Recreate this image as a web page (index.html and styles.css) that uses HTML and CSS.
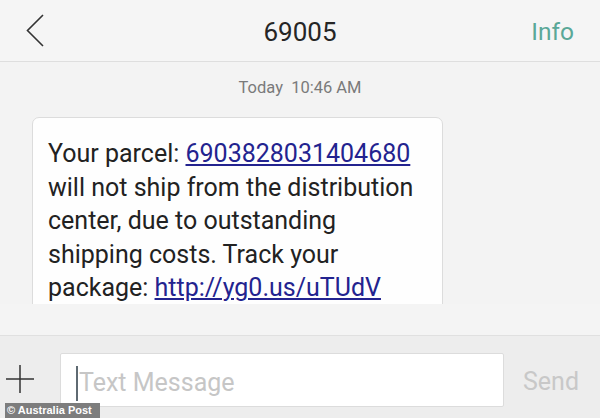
FILE: index.html
```html
<!DOCTYPE html>
<html>
<head>
<meta charset="utf-8">
<link rel="stylesheet" href="styles.css">
</head>
<body>
<div class="screen">
  <header class="topbar">
    <div class="back">
      <svg width="18" height="34" viewBox="0 0 18 34"><polyline points="17,1 1.5,16.5 17,32" fill="none" stroke="#333" stroke-width="1.6"/></svg>
    </div>
    <div class="title">69005</div>
    <div class="info">Info</div>
  </header>
  <main class="thread">
    <div class="stamp">Today&nbsp; 10:46 AM</div>
    <div class="bubble">Your parcel: <a class="link">6903828031404680</a> will not ship from the distribution center, due to outstanding shipping costs. Track your package: <a class="link">http://yg0.us/uTUdV</a></div>
  </main>
  <div class="band"></div>
  <footer class="composer">
    <div class="plus">
      <svg width="30" height="30" viewBox="0 0 30 30"><path d="M15 1v28M1 15h28" stroke="#333" stroke-width="1.5" fill="none"/></svg>
    </div>
    <div class="field">
      <span class="cursor"></span>
      <span class="placeholder">Text Message</span>
    </div>
    <div class="send">Send</div>
  </footer>
  <div class="credit">© Australia Post</div>
</div>
</body>
</html>
```
FILE: styles.css
```css
* { box-sizing: border-box; }
html, body { margin: 0; padding: 0; }
body {
  width: 600px;
  height: 418px;
  overflow: hidden;
  font-family: Roboto, "Noto Sans", sans-serif;
  background: #f3f3f3;
}
.screen {
  position: relative;
  width: 600px;
  height: 418px;
  display: flex;
  flex-direction: column;
}
.topbar {
  height: 62px;
  flex: none;
  background: #f5f5f5;
  border-bottom: 1px solid #dedede;
  display: grid;
  grid-template-columns: 1fr auto 1fr;
  align-items: center;
}
.back {
  padding-left: 26px;
  display: flex;
  align-items: center;
  padding-top: 1px;
}
.title {
  font-size: 26px;
  color: #262626;
  padding-top: 2px;
}
.info {
  justify-self: end;
  margin-right: 26px;
  font-size: 24.5px;
  color: #5aa898;
  padding-top: 2px;
}
.thread {
  height: 242px;
  flex: none;
  overflow: hidden;
  background: #f3f3f3;
}
.stamp {
  text-align: center;
  font-size: 16.5px;
  line-height: 20px;
  color: #7a7a7a;
  padding-top: 16px;
}
.bubble {
  margin: 19px 0 0 32px;
  width: 411px;
  background: #fefefe;
  border: 1px solid #dcdcdc;
  border-radius: 7px;
  padding: 19px 20px 20px 15px;
  font-size: 25px;
  line-height: 33.5px;
  color: #222;
}
.link {
  color: #23238f;
  text-decoration: underline;
  text-decoration-thickness: 1.5px;
  text-underline-offset: 2px;
}
.band {
  height: 31px;
  flex: none;
  background: #f4f4f4;
}
.composer {
  flex: 1;
  background: #ededed;
  border-top: 1px solid #e0e0e0;
  display: flex;
  align-items: flex-start;
  padding-top: 17px;
}
.plus {
  width: 60px;
  padding-left: 5px;
  padding-top: 11px;
  display: flex;
}
.field {
  width: 444px;
  height: 54px;
  background: #fff;
  border: 1px solid #dcdcdc;
  border-radius: 2px;
  display: flex;
  align-items: center;
  padding-left: 15px;
}
.cursor {
  width: 2px;
  height: 35px;
  background: #5f6a72;
  margin-top: 6px;
}
.placeholder {
  font-size: 25px;
  color: #c6c6c6;
  margin-left: 1px;
  padding-top: 4px;
}
.send {
  margin-left: 19px;
  font-size: 25px;
  color: #c8c8c8;
  line-height: 54px;
  padding-top: 2px;
}
.credit {
  position: absolute;
  left: 5px;
  bottom: 0;
  height: 15px;
  width: 95px;
  background: #7d7d7d;
  color: #fff;
  font-family: "Liberation Sans", Arial, sans-serif;
  font-weight: bold;
  font-size: 11px;
  line-height: 15px;
  padding-left: 2px;
  white-space: nowrap;
}
```
